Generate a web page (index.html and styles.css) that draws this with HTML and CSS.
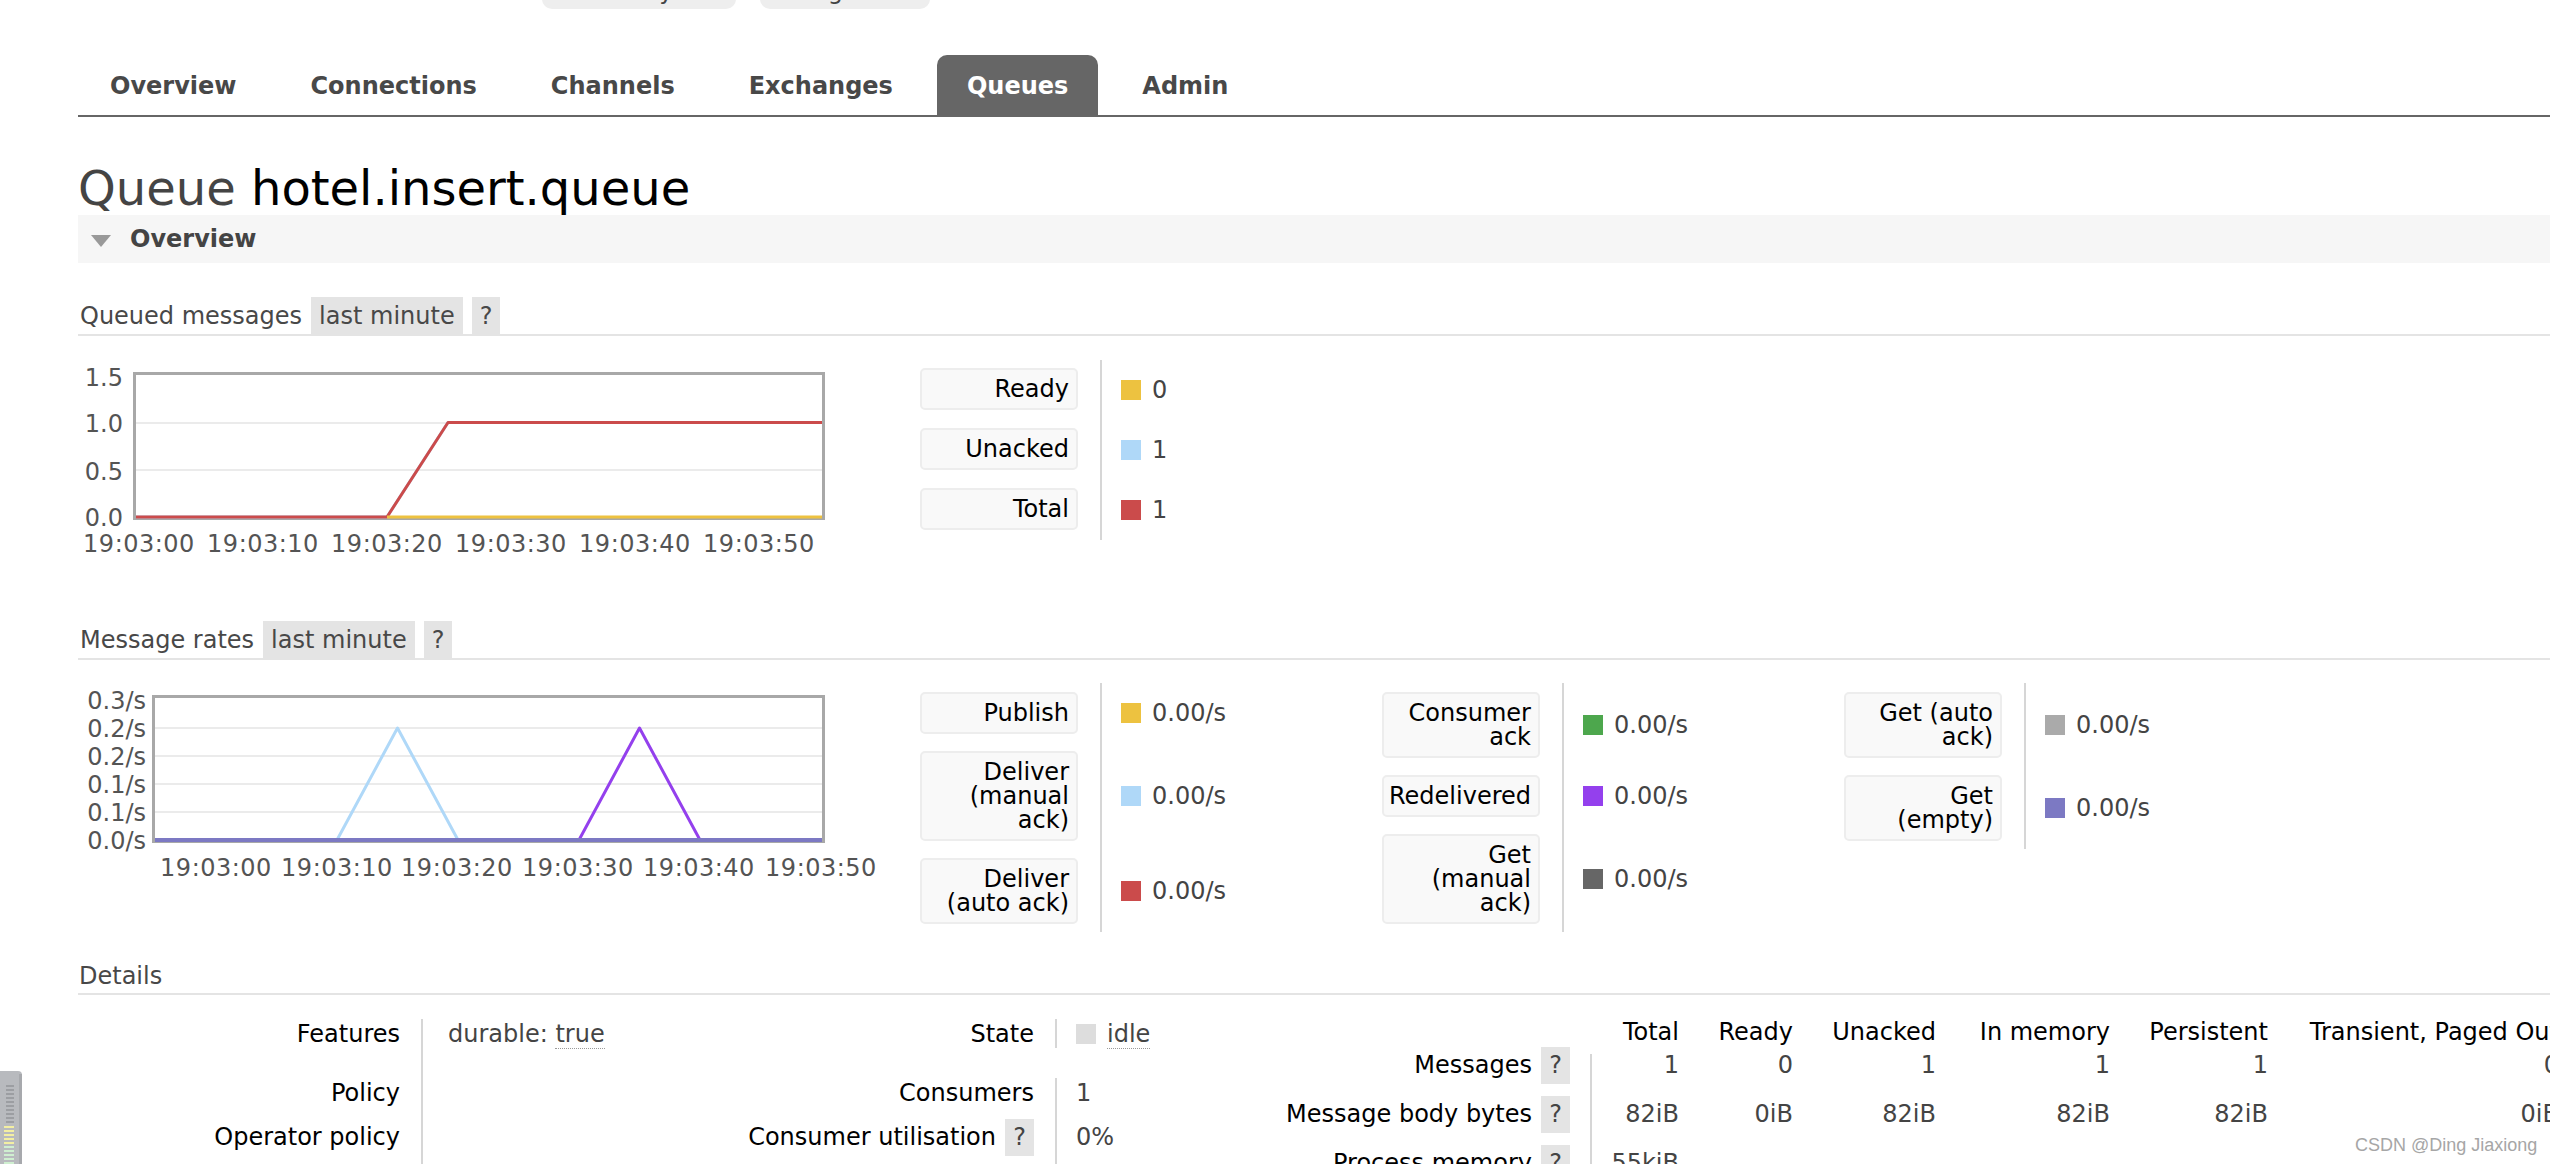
FILE: index.html
```html
<!DOCTYPE html>
<html lang="en">
<head>
<meta charset="utf-8">
<title>RabbitMQ Management: Queue hotel.insert.queue</title>
<link rel="stylesheet" href="styles.css">
</head>
<body>
<div class="topbar">
  <div class="topbtn b1">Policy</div>
  <div class="topbtn b2">Log out</div>
</div>

<nav class="nav">
  <a href="#">Overview</a>
  <a href="#">Connections</a>
  <a href="#">Channels</a>
  <a href="#">Exchanges</a>
  <a href="#" class="active">Queues</a>
  <a href="#">Admin</a>
</nav>

<h1>Queue <b>hotel.insert.queue</b></h1>

<div class="section-bar"><span class="tri"></span>Overview</div>

<div class="h2row first">
  <span class="t">Queued messages</span>
  <span class="pill">last minute</span>
  <span class="pill">?</span>
</div>

<div class="chart-row">
  <svg class="chart" width="760" height="201" viewBox="0 0 760 201">
    <g class="ylab">
      <text x="45" y="26">1.5</text>
      <text x="45" y="72">1.0</text>
      <text x="45" y="120">0.5</text>
      <text x="45" y="166">0.0</text>
    </g>
    <line class="grid" x1="58" y1="63" x2="744" y2="63"/>
    <line class="grid" x1="58" y1="110" x2="744" y2="110"/>
    <rect class="frame" x="56.5" y="13.5" width="689" height="145"/>
    <polyline class="s-unacked" points="58,157 309,157 370,62.5 744,62.5"/>
    <polyline class="s-total" points="58,157 309,157 370,62.5 744,62.5"/>
    <polyline class="s-ready" points="309,157 744,157"/>
    <g class="xlab">
      <text x="61" y="192">19:03:00</text>
      <text x="185" y="192">19:03:10</text>
      <text x="309" y="192">19:03:20</text>
      <text x="433" y="192">19:03:30</text>
      <text x="557" y="192">19:03:40</text>
      <text x="681" y="192">19:03:50</text>
    </g>
  </svg>

  <div class="legend q-legend">
    <div class="lk"><div class="lbox"><span>Ready</span></div></div>
    <div class="lv"><i class="sw c-yellow"></i>0</div>
    <div class="lk"><div class="lbox"><span>Unacked</span></div></div>
    <div class="lv"><i class="sw c-lblue"></i>1</div>
    <div class="lk"><div class="lbox"><span>Total</span></div></div>
    <div class="lv"><i class="sw c-red"></i>1</div>
  </div>
</div>

<div class="h2row second">
  <span class="t">Message rates</span>
  <span class="pill">last minute</span>
  <span class="pill">?</span>
</div>

<div class="chart-row rates-row">
  <svg class="chart" width="810" height="200" viewBox="0 0 810 200">
    <g class="ylab">
      <text x="68" y="26">0.3/s</text>
      <text x="68" y="54">0.2/s</text>
      <text x="68" y="82">0.2/s</text>
      <text x="68" y="110">0.1/s</text>
      <text x="68" y="138">0.1/s</text>
      <text x="68" y="166">0.0/s</text>
    </g>
    <line class="grid" x1="77" y1="45" x2="744" y2="45"/>
    <line class="grid" x1="77" y1="73" x2="744" y2="73"/>
    <line class="grid" x1="77" y1="101" x2="744" y2="101"/>
    <line class="grid" x1="77" y1="129" x2="744" y2="129"/>
    <rect class="frame" x="75.5" y="13.5" width="670" height="145"/>
    <polyline class="s-unacked" points="77,157 259,157 319.5,45 380,157 744,157"/>
    <polyline class="s-redeliv" points="77,157 501,157 561.5,45 622,157 744,157"/>
    <polyline class="s-empty" points="77,157 744,157"/>
    <g class="xlab">
      <text x="138" y="193">19:03:00</text>
      <text x="259" y="193">19:03:10</text>
      <text x="379" y="193">19:03:20</text>
      <text x="500" y="193">19:03:30</text>
      <text x="621" y="193">19:03:40</text>
      <text x="743" y="193">19:03:50</text>
    </g>
  </svg>

  <div class="rates">
    <div class="legend r-legend">
      <div class="lk"><div class="lbox"><span>Publish</span></div></div>
      <div class="lv"><i class="sw c-yellow"></i>0.00/s</div>
      <div class="lk"><div class="lbox"><span>Deliver<br>(manual<br>ack)</span></div></div>
      <div class="lv"><i class="sw c-lblue"></i>0.00/s</div>
      <div class="lk"><div class="lbox"><span>Deliver<br>(auto ack)</span></div></div>
      <div class="lv"><i class="sw c-red"></i>0.00/s</div>
    </div>
    <div class="legend r-legend">
      <div class="lk"><div class="lbox"><span>Consumer<br>ack</span></div></div>
      <div class="lv"><i class="sw c-green"></i>0.00/s</div>
      <div class="lk"><div class="lbox"><span>Redelivered</span></div></div>
      <div class="lv"><i class="sw c-purple"></i>0.00/s</div>
      <div class="lk"><div class="lbox"><span>Get<br>(manual<br>ack)</span></div></div>
      <div class="lv"><i class="sw c-dgrey"></i>0.00/s</div>
    </div>
    <div class="legend r-legend">
      <div class="lk"><div class="lbox"><span>Get (auto<br>ack)</span></div></div>
      <div class="lv"><i class="sw c-grey"></i>0.00/s</div>
      <div class="lk"><div class="lbox"><span>Get<br>(empty)</span></div></div>
      <div class="lv"><i class="sw c-violet"></i>0.00/s</div>
    </div>
  </div>
</div>

<div class="h3">Details</div>

<div class="details">
  <div class="facts t1">
    <div class="th">Features</div>
    <div class="td">durable: <abbr>true</abbr></div>
    <div class="th">Policy</div>
    <div class="td"></div>
    <div class="th r3">Operator policy</div>
    <div class="td r3"></div>
  </div>

  <div class="facts t2">
    <div class="th">State</div>
    <div class="td state"><i class="sw c-idle"></i><abbr>idle</abbr></div>
    <div class="th">Consumers</div>
    <div class="td">1</div>
    <div class="th r3"><span>Consumer utilisation</span><span class="q">?</span></div>
    <div class="td r3">0%</div>
  </div>

  <div class="t3">
    <div class="labels">
      <div class="lrow"><span>Messages</span><span class="q">?</span></div>
      <div class="lrow"><span>Message body bytes</span><span class="q">?</span></div>
      <div class="lrow"><span>Process memory</span><span class="q">?</span></div>
    </div>
    <div class="data">
      <div class="hdr">
        <span>Total</span><span>Ready</span><span>Unacked</span><span>In memory</span><span>Persistent</span><span>Transient, Paged Out</span>
      </div>
      <div class="vals">
        <span>1</span><span>0</span><span>1</span><span>1</span><span>1</span><span>0</span>
        <span>82iB</span><span>0iB</span><span>82iB</span><span>82iB</span><span>82iB</span><span>0iB</span>
        <span>55kiB</span><span></span><span></span><span></span><span></span><span></span>
      </div>
    </div>
  </div>
</div>

<div class="watermark">CSDN @Ding Jiaxiong</div>

<svg class="meter" width="24" height="93" viewBox="0 0 24 93">
  <path d="M0 0 H18 Q22 0 22 4 V93 H0 Z" fill="#b8babe"/>
  <rect x="19" y="3" width="3" height="90" fill="#a7a9ad"/>
  <g fill="#9c9ea2">
    <rect x="6" y="14" width="8" height="2"/><rect x="6" y="18" width="8" height="2"/>
    <rect x="6" y="22" width="8" height="2"/><rect x="6" y="26" width="8" height="2"/>
    <rect x="6" y="30" width="8" height="2"/><rect x="6" y="34" width="8" height="2"/>
    <rect x="6" y="38" width="8" height="2"/><rect x="6" y="42" width="8" height="2"/>
    <rect x="6" y="46" width="8" height="2"/><rect x="6" y="50" width="8" height="2"/>
  </g>
  <g fill="#f3efa2">
    <rect x="4" y="55" width="10" height="2"/><rect x="4" y="59" width="10" height="2"/>
    <rect x="4" y="63" width="10" height="2"/><rect x="4" y="67" width="10" height="2"/>
    <rect x="4" y="71" width="10" height="2"/>
  </g>
  <g fill="#cfefd0">
    <rect x="4" y="75" width="10" height="2"/><rect x="4" y="79" width="10" height="2"/>
    <rect x="4" y="83" width="10" height="2"/><rect x="4" y="87" width="10" height="2"/>
    <rect x="4" y="91" width="10" height="2"/>
  </g>
</svg>
</body>
</html>
```

FILE: styles.css
```css
html {
  overflow: hidden;
}

body {
  margin: 0;
  width: 2600px;
  font-family: "DejaVu Sans", Verdana, sans-serif;
  font-size: 24px;
  line-height: 28px;
  color: #444;
  background: #fff;
  position: relative;
}

/* top buttons, mostly scrolled out of view */
.topbar {
  height: 9px;
  display: flex;
  align-items: flex-end;
  gap: 24px;
  padding-left: 542px;
}

.topbtn {
  flex: none;
  height: 40px;
  box-sizing: border-box;
  background: #eee;
  border-radius: 0 0 10px 10px;
  display: flex;
  align-items: flex-end;
  justify-content: center;
  padding-bottom: 6px;
  line-height: 24px;
  color: #444;
}

.b1 { width: 194px; }
.b2 { width: 170px; }

/* main navigation */
.nav {
  margin: 46px 0 0 78px;
  padding-left: 2px;
  height: 60px;
  display: flex;
  gap: 14px;
  border-bottom: 2px solid #666;
}

.nav a {
  display: flex;
  align-items: center;
  padding: 1px 30px 0;
  font-weight: bold;
  color: #484848;
  text-decoration: none;
  border-radius: 10px 10px 0 0;
}

.nav a.active {
  background: #666;
  color: #fff;
}

h1 {
  margin: 44px 0 0 78px;
  font-size: 48px;
  line-height: 54px;
  font-weight: normal;
  color: #444;
}

h1 b {
  font-weight: normal;
  color: #000;
}

.section-bar {
  margin-left: 78px;
  height: 48px;
  background: #f6f6f6;
  display: flex;
  align-items: center;
  font-weight: bold;
  color: #444;
}

.tri {
  width: 0;
  height: 0;
  border-left: 10px solid transparent;
  border-right: 10px solid transparent;
  border-top: 12px solid #999;
  margin: 4px 19px 0 13px;
}

/* sub headings with "last minute" pill */
.h2row {
  margin-left: 78px;
  height: 37px;
  display: flex;
  gap: 9px;
  border-bottom: 2px solid #e4e4e4;
  color: #484848;
}

.h2row.first { margin-top: 34px; }
.h2row.second { margin-top: 60px; }

.h2row .t {
  align-self: center;
  padding: 1px 0 0 2px;
}

.pill {
  display: flex;
  align-items: center;
  padding: 1px 8px 0;
  background: #e4e4e4;
}

/* charts */
.chart-row {
  margin: 24px 0 0 78px;
  display: flex;
  align-items: flex-start;
}

.chart-row.rates-row { margin-top: 23px; }

.chart {
  flex: none;
  display: block;
}

.chart text {
  font-family: "DejaVu Sans", Verdana, sans-serif;
  font-size: 24px;
  fill: #545454;
}

.chart .ylab text { text-anchor: end; }

.chart .xlab text {
  text-anchor: middle;
  letter-spacing: 0.5px;
}

.chart .grid {
  stroke: #ebebeb;
  stroke-width: 2;
}

.chart .frame {
  fill: none;
  stroke: #a8a8a8;
  stroke-width: 3;
}

.chart polyline {
  fill: none;
  stroke-width: 3;
  stroke-linejoin: round;
}

.s-ready { stroke: #edc240; }
.s-unacked { stroke: #afd8f8; }
.s-total { stroke: #cb4b4b; }
.s-redeliv { stroke: #9440ed; }
.chart .s-empty { stroke: #7c79c3; stroke-width: 4; }

/* legends */
.legend {
  display: grid;
  grid-template-columns: 180px 280px;
  flex: none;
}

.q-legend { margin-left: 82px; }

.rates {
  margin-left: 32px;
  display: flex;
  align-items: flex-start;
}

.r-legend { width: 462px; }

.lk {
  padding: 8px 22px 10px 0;
}

.r-legend .lk {
  padding: 9px 22px 8px 0;
}

.lbox {
  width: 158px;
  box-sizing: border-box;
  border: 2px solid #ededed;
  border-radius: 5px;
  background: #f9f9f9;
  padding: 7px 7px 7px 4px;
  display: flex;
  justify-content: flex-end;
  line-height: 24px;
  text-align: right;
  white-space: nowrap;
  color: #000;
}

.lv {
  border-left: 2px solid #d6d6d6;
  padding-left: 19px;
  display: flex;
  align-items: center;
  gap: 11px;
  color: #444;
}

.sw {
  display: inline-block;
  flex: none;
  width: 20px;
  height: 20px;
}

.c-yellow { background: #edc240; }
.c-lblue { background: #afd8f8; }
.c-red { background: #cb4b4b; }
.c-green { background: #4da74d; }
.c-purple { background: #9440ed; }
.c-dgrey { background: #666; }
.c-grey { background: #aaa; }
.c-violet { background: #7c79c3; }
.c-idle { background: #ddd; }

/* details */
.h3 {
  margin: 30px 0 0 78px;
  padding: 0 0 3px 1px;
  border-bottom: 2px solid #e4e4e4;
  color: #484848;
}

.details {
  margin-left: 78px;
  display: flex;
  align-items: flex-start;
}

.facts {
  flex: none;
  margin-top: 24px;
  display: grid;
  grid-template-rows: 59px 41px 48px;
}

.t1 { grid-template-columns: 343px 300px; }
.t2 { grid-template-columns: 334px 225px; }

.facts .th {
  padding: 1px 21px 0 0;
  text-align: right;
  color: #000;
}

.facts .td {
  border-left: 2px solid #d6d6d6;
  padding-top: 1px;
  color: #444;
}

.t1 .td { padding-left: 25px; }
.t2 .td { padding-left: 19px; }

.facts .r3 {
  padding-top: 0;
  line-height: 37px;
}

.facts .th.r3 {
  display: flex;
  justify-content: flex-end;
  align-items: flex-start;
  gap: 9px;
}

.state {
  display: flex;
  align-items: center;
  gap: 11px;
  align-self: start;
  height: 28px;
}

.t2 .td.state { padding-top: 1px; }

abbr {
  text-decoration: none;
  border-bottom: 1px dotted #999;
  color: #444;
}

.q {
  display: inline-block;
  width: 29px;
  line-height: 37px;
  text-align: center;
  background: #e4e4e4;
  color: #444;
}

.t3 {
  flex: none;
  margin-top: 23px;
  display: flex;
}

.t3 .labels {
  width: 310px;
  box-sizing: border-box;
  padding: 29px 20px 0 0;
}

.t3 .lrow {
  height: 49px;
  display: flex;
  justify-content: flex-end;
  align-items: flex-start;
  gap: 9px;
  line-height: 37px;
  color: #000;
}

.t3 .hdr,
.t3 .vals {
  display: grid;
  grid-template-columns: 89px 114px 143px 174px 158px 291px;
  text-align: right;
}

.t3 .hdr {
  height: 29px;
  color: #000;
  white-space: nowrap;
}

.t3 .vals {
  grid-auto-rows: 49px;
  line-height: 37px;
  color: #444;
  background: linear-gradient(#d6d6d6, #d6d6d6) no-repeat 0 7px / 2px 100%;
}

/* overlays */
.watermark {
  position: absolute;
  left: 2355px;
  top: 1135px;
  font-family: "Liberation Sans", Arial, sans-serif;
  font-size: 18px;
  line-height: 20px;
  color: #a6a6a6;
  white-space: nowrap;
}

.meter {
  position: absolute;
  left: 0;
  top: 1071px;
}
```
